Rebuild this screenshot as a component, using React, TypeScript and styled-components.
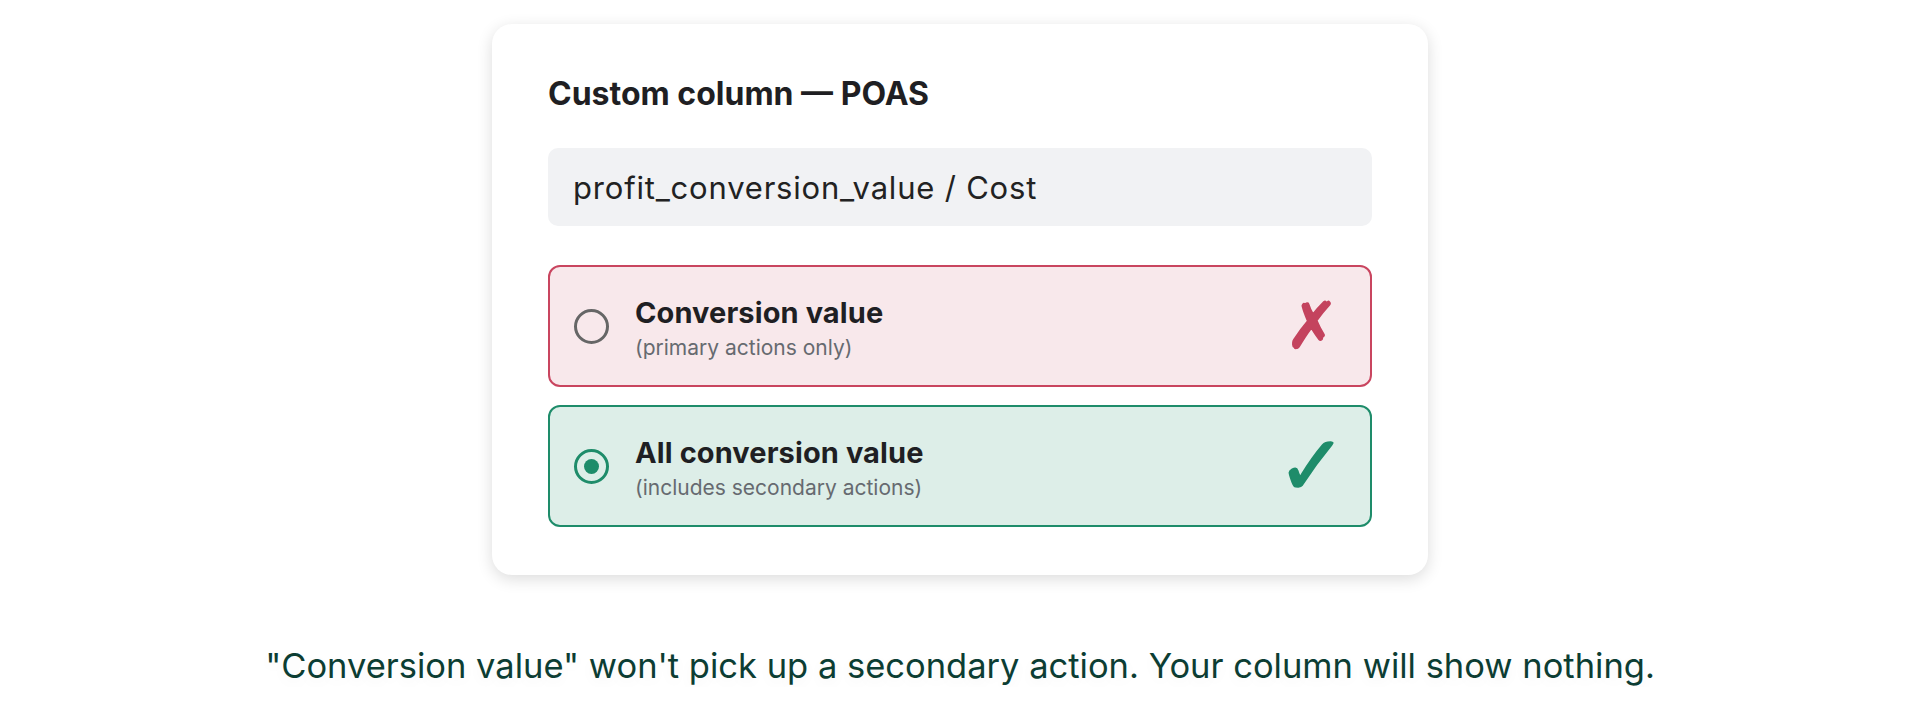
import React from 'react';
import styled, { createGlobalStyle } from 'styled-components';

const GlobalStyle = createGlobalStyle`
  body {
    margin: 0;
    background: #ffffff;
    font-family: Inter, "Noto Sans", sans-serif;
  }
`;

type Tone = 'bad' | 'good';

const tones = {
  bad: { bg: '#f8e8eb', border: '#c9455f', mark: '#c4435e', size: 64 },
  good: { bg: '#ddeee8', border: '#1e8c6a', mark: '#1e8c6a', size: 84 },
};

const Page = styled.div`
  display: flex;
  flex-direction: column;
  align-items: center;
  padding-top: 24px;
`;

const Card = styled.div`
  width: 936px;
  box-sizing: border-box;
  padding: 51px 56px 48px;
  background: #fff;
  border-radius: 20px;
  box-shadow: 0 4px 16px rgba(0, 0, 0, 0.14);
`;

const Title = styled.h2`
  margin: 0 0 36px;
  font-size: 32px;
  line-height: 37px;
  font-weight: 700;
  color: #1f1f23;
`;

const Formula = styled.div`
  height: 78px;
  display: flex;
  align-items: center;
  padding: 0 25px;
  margin-bottom: 39px;
  background: #f1f2f4;
  border-radius: 10px;
  font-size: 31px;
  letter-spacing: 0.8px;
  color: #222;
`;

const Options = styled.div`
  display: flex;
  flex-direction: column;
  gap: 18px;
`;

const Option = styled.div<{ $tone: Tone }>`
  height: 122px;
  box-sizing: border-box;
  display: flex;
  align-items: center;
  padding: 0 26px 0 24px;
  border: 2px solid ${(p) => tones[p.$tone].border};
  background: ${(p) => tones[p.$tone].bg};
  border-radius: 12px;
`;

const Radio = styled.span<{ $checked?: boolean }>`
  width: 35px;
  height: 35px;
  box-sizing: border-box;
  border-radius: 50%;
  border: 3px solid ${(p) => (p.$checked ? '#1e8c6a' : '#666')};
  display: flex;
  align-items: center;
  justify-content: center;
  flex-shrink: 0;

  &::after {
    content: '';
    width: 15px;
    height: 15px;
    border-radius: 50%;
    background: #1e8c6a;
    display: ${(p) => (p.$checked ? 'block' : 'none')};
  }
`;

const Text = styled.div`
  flex: 1;
  margin-left: 26px;
  padding-top: 4px;
  display: flex;
  flex-direction: column;
`;

const Label = styled.div`
  font-size: 29px;
  line-height: 35px;
  font-weight: 700;
  color: #1f1f23;
  letter-spacing: 0.1px;
`;

const Sub = styled.div`
  margin-top: 5px;
  font-size: 21px;
  line-height: 26px;
  color: #666a70;
`;

const Mark = styled.span<{ $tone: Tone }>`
  width: 64px;
  display: flex;
  justify-content: center;
  font-family: "DejaVu Sans", sans-serif;
  font-weight: 700;
  font-size: ${(p) => tones[p.$tone].size}px;
  line-height: 1;
  color: ${(p) => tones[p.$tone].mark};
  -webkit-text-stroke: 1.5px ${(p) => tones[p.$tone].mark};
`;

const Note = styled.p`
  margin: 70px 0 0;
  font-size: 34.5px;
  line-height: 42px;
  color: #0c3d33;
  text-align: center;
  text-shadow: 0 4px 14px rgba(0, 0, 0, 0.05);
`;

const App: React.FC = () => {
  return (
    <>
      <GlobalStyle />
      <Page>
        <Card>
          <Title>Custom column — POAS</Title>
          <Formula>profit_conversion_value / Cost</Formula>
          <Options>
            <Option $tone="bad">
              <Radio />
              <Text>
                <Label>Conversion value</Label>
                <Sub>(primary actions only)</Sub>
              </Text>
              <Mark $tone="bad">✗</Mark>
            </Option>
            <Option $tone="good">
              <Radio $checked />
              <Text>
                <Label>All conversion value</Label>
                <Sub>(includes secondary actions)</Sub>
              </Text>
              <Mark $tone="good">✓</Mark>
            </Option>
          </Options>
        </Card>
        <Note>"Conversion value" won't pick up a secondary action. Your column will show nothing.</Note>
      </Page>
    </>
  );
};

export default App;
